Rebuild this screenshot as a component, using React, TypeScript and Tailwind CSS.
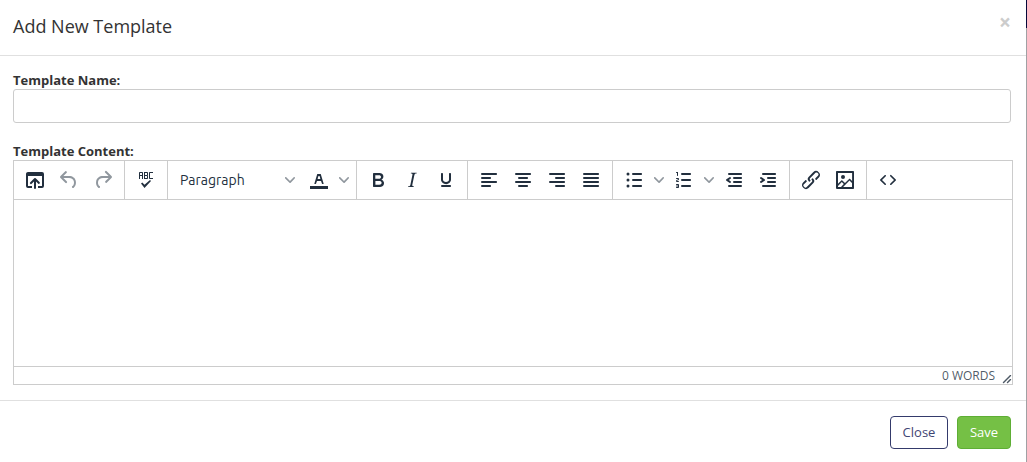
import type { ReactNode } from "react";

const ICONS = {
  browse:
    "M19 4a2 2 0 012 2v12a2 2 0 01-2 2h-4v-2h4V8H5v10h4v2H5a2 2 0 01-2-2V6c0-1.1.9-2 2-2h14zm-8 9.4l-2.3 2.3a1 1 0 11-1.4-1.4l4-4a1 1 0 011.4 0l4 4a1 1 0 01-1.4 1.4L13 13.4V20a1 1 0 01-2 0v-6.6z",
  undo: "M6.4 8H12c3.7 0 6.2 2 6.8 5.1.6 2.7-.4 5.6-2.3 6.8a1 1 0 01-1-1.8c1.1-.6 1.8-2.7 1.4-4.6-.5-2.1-2.1-3.5-4.9-3.5H6.4l3.3 3.3a1 1 0 11-1.4 1.4l-5-5a1 1 0 010-1.4l5-5a1 1 0 011.4 1.4L6.4 8z",
  redo: "M17.6 10H12c-2.8 0-4.4 1.4-4.9 3.5-.4 2 .3 4 1.4 4.6a1 1 0 11-1 1.8c-2-1.2-2.9-4.1-2.3-6.8.6-3 3-5.1 6.8-5.1h5.6l-3.3-3.3a1 1 0 111.4-1.4l5 5a1 1 0 010 1.4l-5 5a1 1 0 01-1.4-1.4l3.3-3.3z",
  spell:
    "M6 8v3H5V5c0-.3.1-.5.3-.7.2-.2.4-.3.7-.3h2c.3 0 .5.1.7.3.2.2.3.4.3.7v6H8V8H6zm0-3v2h2V5H6zm13 0h-3v5h3v1h-3a1 1 0 01-.7-.3 1 1 0 01-.3-.7V5c0-.3.1-.5.3-.7.2-.2.4-.3.7-.3h3v1zm-5 1.5l-.1.7c-.1.2-.3.3-.6.3.3 0 .5.1.6.3l.1.7V10c0 .3-.1.5-.3.7a1 1 0 01-.7.3h-3V4h3c.3 0 .5.1.7.3.2.2.3.4.3.7v1.5zM13 10V8h-2v2h2zm0-3V5h-2v2h2zm3 5l1 1-6.5 7L7 15.5l1.3-1 2.2 2.2L16 12z",
  color:
    "M3 18h18v3H3zM8.7 16h-.8a.5.5 0 01-.5-.6l2.7-9c.1-.3.3-.4.5-.4h2.8c.2 0 .4.1.5.4l2.7 9a.5.5 0 01-.5.6h-.8a.5.5 0 01-.4-.4l-.7-2.2c0-.3-.3-.4-.5-.4h-3.4c-.2 0-.4.1-.5.4l-.7 2.2c0 .3-.2.4-.4.4zm2.6-7.6l-.6 2a.5.5 0 00.5.6h1.6a.5.5 0 00.5-.6l-.6-2c0-.3-.3-.4-.5-.4h-.4c-.2 0-.4.1-.5.4z",
  bold: "M7.8 19c-.3 0-.5 0-.6-.2l-.2-.5V5.7c0-.2 0-.4.2-.5l.6-.2h5c1.5 0 2.7.3 3.5 1 .7.6 1.1 1.4 1.1 2.5a3 3 0 01-.6 1.9c-.4.6-1 1-1.6 1.2.4.1.9.3 1.3.6s.8.7 1 1.2c.4.4.5 1 .5 1.6 0 1.3-.4 2.3-1.3 3-.8.7-2.1 1-3.8 1H7.8zm5-8.3c.6 0 1.2-.1 1.6-.5.4-.3.6-.7.6-1.3 0-1.1-.8-1.7-2.3-1.7H9.3v3.5h3.4zm.5 6c.7 0 1.3-.1 1.7-.4.4-.4.6-.9.6-1.5s-.2-1-.7-1.4c-.4-.3-1-.4-2-.4H9.4v3.8h4z",
  italic:
    "M16.7 4.7l-.1.9h-.3c-.6 0-1 0-1.4.3-.3.3-.4.6-.5 1.1l-2.1 9.8v.6c0 .5.4.8 1.4.8h.2l-.2.8H8l.2-.8h.2c1.1 0 1.8-.5 2-1.5l2-9.8.1-.5c0-.6-.4-.8-1.4-.8h-.3l.2-.9h5.8z",
  underline:
    "M16 5c.6 0 1 .4 1 1v5.5a4 4 0 01-.4 1.8l-1 1.4a5.3 5.3 0 01-5.5 1 5 5 0 01-1.6-1c-.5-.4-.8-.9-1.1-1.4a4 4 0 01-.4-1.8V6c0-.6.4-1 1-1s1 .4 1 1v5.5c0 .3 0 .6.2 1l.6.7a3.3 3.3 0 002.2.8 3.4 3.4 0 002.2-.8c.3-.2.4-.5.6-.8l.2-.9V6c0-.6.4-1 1-1zM8 17h8c.6 0 1 .4 1 1s-.4 1-1 1H8a1 1 0 010-2z",
  left: "M5 5h14c.6 0 1 .4 1 1s-.4 1-1 1H5a1 1 0 110-2zm0 4h8c.6 0 1 .4 1 1s-.4 1-1 1H5a1 1 0 110-2zm0 8h8c.6 0 1 .4 1 1s-.4 1-1 1H5a1 1 0 010-2zm0-4h14c.6 0 1 .4 1 1s-.4 1-1 1H5a1 1 0 010-2z",
  center:
    "M5 5h14c.6 0 1 .4 1 1s-.4 1-1 1H5a1 1 0 110-2zm3 4h8c.6 0 1 .4 1 1s-.4 1-1 1H8a1 1 0 110-2zm0 8h8c.6 0 1 .4 1 1s-.4 1-1 1H8a1 1 0 010-2zm-3-4h14c.6 0 1 .4 1 1s-.4 1-1 1H5a1 1 0 010-2z",
  right:
    "M5 5h14c.6 0 1 .4 1 1s-.4 1-1 1H5a1 1 0 110-2zm6 4h8c.6 0 1 .4 1 1s-.4 1-1 1h-8a1 1 0 010-2zm0 8h8c.6 0 1 .4 1 1s-.4 1-1 1h-8a1 1 0 010-2zm-6-4h14c.6 0 1 .4 1 1s-.4 1-1 1H5a1 1 0 010-2z",
  justify:
    "M5 5h14c.6 0 1 .4 1 1s-.4 1-1 1H5a1 1 0 110-2zm0 4h14c.6 0 1 .4 1 1s-.4 1-1 1H5a1 1 0 110-2zm0 4h14c.6 0 1 .4 1 1s-.4 1-1 1H5a1 1 0 010-2zm0 4h14c.6 0 1 .4 1 1s-.4 1-1 1H5a1 1 0 010-2z",
  bullets:
    "M11 5h8c.6 0 1 .4 1 1s-.4 1-1 1h-8a1 1 0 010-2zm0 6h8c.6 0 1 .4 1 1s-.4 1-1 1h-8a1 1 0 010-2zm0 6h8c.6 0 1 .4 1 1s-.4 1-1 1h-8a1 1 0 010-2zM4.5 6a1.5 1.5 0 113 0 1.5 1.5 0 01-3 0zm0 6a1.5 1.5 0 113 0 1.5 1.5 0 01-3 0zm0 6a1.5 1.5 0 113 0 1.5 1.5 0 01-3 0z",
  numbers:
    "M10 17h8c.6 0 1 .4 1 1s-.4 1-1 1h-8a1 1 0 010-2zm0-6h8c.6 0 1 .4 1 1s-.4 1-1 1h-8a1 1 0 010-2zm0-6h8c.6 0 1 .4 1 1s-.4 1-1 1h-8a1 1 0 110-2zM6 4v3.5c0 .3-.2.5-.5.5a.5.5 0 01-.5-.5V5h-.5a.5.5 0 010-1H6zm-1 8.8l.2.2h1.3c.3 0 .5.2.5.5s-.2.5-.5.5H4.9a1 1 0 01-.9-1V13c0-.4.3-.8.6-1l1.2-.4.2-.3a.2.2 0 00-.2-.2H4.5a.5.5 0 01-.5-.5c0-.3.2-.5.5-.5h1.6c.5 0 .9.4.9 1v.1c0 .4-.3.8-.6 1l-1.2.4-.2.3zM7 17v2c0 .6-.4 1-1 1H4.5a.5.5 0 010-1h1.2c.2 0 .3-.1.3-.3 0-.2-.1-.3-.3-.3H4.4a.4.4 0 110-.8h1.3c.2 0 .3-.1.3-.3 0-.2-.1-.3-.3-.3H4.5a.5.5 0 110-1H6c.6 0 1 .4 1 1z",
  outdent:
    "M7 5h12c.6 0 1 .4 1 1s-.4 1-1 1H7a1 1 0 110-2zm5 4h7c.6 0 1 .4 1 1s-.4 1-1 1h-7a1 1 0 010-2zm0 4h7c.6 0 1 .4 1 1s-.4 1-1 1h-7a1 1 0 010-2zm-5 4h12a1 1 0 010 2H7a1 1 0 010-2zm1.6-3.8a1 1 0 01-1.2 1.6l-3-2a1 1 0 010-1.6l3-2a1 1 0 011.2 1.6L6.8 12l1.8 1.2z",
  indent:
    "M7 5h12c.6 0 1 .4 1 1s-.4 1-1 1H7a1 1 0 110-2zm5 4h7c.6 0 1 .4 1 1s-.4 1-1 1h-7a1 1 0 010-2zm0 4h7c.6 0 1 .4 1 1s-.4 1-1 1h-7a1 1 0 010-2zm-5 4h12a1 1 0 010 2H7a1 1 0 010-2zm-2.6-3.8L6.2 12l-1.8-1.2a1 1 0 011.2-1.6l3 2a1 1 0 010 1.6l-3 2a1 1 0 11-1.2-1.6z",
  link: "M6.2 12.3a1 1 0 011.4 1.4l-2.1 2a2 2 0 102.7 2.8l4.8-4.8a1 1 0 000-1.4 1 1 0 111.4-1.3 2.9 2.9 0 010 4L9.6 20a3.9 3.9 0 01-5.5-5.5l2-2zm11.6-.6a1 1 0 01-1.4-1.4l2-2a2 2 0 10-2.6-2.8L11 10.3a1 1 0 000 1.4A1 1 0 119.6 13a2.9 2.9 0 010-4L14.4 4a3.9 3.9 0 015.5 5.5l-2 2z",
  image:
    "M5 15.7l3.3-3.2c.3-.3.7-.3 1 0L12 15l4.1-4c.3-.4.8-.4 1 0l2 1.9V5H5v10.7zM5 18V19h3l2.8-2.9-2-2L5 17.9zm14-3l-2.5-2.4-6.4 6.5H19v-4zM4 3h16c.6 0 1 .4 1 1v16c0 .6-.4 1-1 1H4a1 1 0 01-1-1V4c0-.6.4-1 1-1zm6 8a2 2 0 100-4 2 2 0 000 4z",
  code: "M9.8 15.7c.3.3.3.8 0 1-.3.4-.9.4-1.2 0l-4.4-4.1a.8.8 0 010-1.2l4.4-4.2c.3-.3.9-.3 1.2 0 .3.3.3.8 0 1.1L6 12l3.8 3.7zM14.2 15.7c-.3.3-.3.8 0 1 .4.4.9.4 1.2 0l4.4-4.1c.3-.3.3-.9 0-1.2l-4.4-4.2a.8.8 0 00-1.2 0c-.3.3-.3.8 0 1.1L18 12l-3.8 3.7z",
};

type IconName = keyof typeof ICONS;

function Tool({ icon, label, disabled }: { icon: IconName; label: string; disabled?: boolean }) {
  return (
    <button
      type="button"
      aria-label={label}
      disabled={disabled}
      className="flex h-[34px] w-[34px] items-center justify-center text-[#222f3e] hover:bg-gray-200 disabled:text-[#222f3e]/50 disabled:hover:bg-transparent"
    >
      <svg width="24" height="24" viewBox="0 0 24 24" fill="currentColor" fillRule="evenodd" aria-hidden="true">
        <path d={ICONS[icon]} />
      </svg>
    </button>
  );
}

function Chevron() {
  return (
    <svg width="10" height="10" viewBox="0 0 10 10" className="fill-[#222f3e]/50" aria-hidden="true">
      <path d="M8.7 2.2c.3-.3.8-.3 1 0 .4.4.4.9 0 1.2L5.7 7.8c-.3.3-.9.3-1.2 0L.2 3.4a.8.8 0 010-1.2c.3-.3.8-.3 1.1 0L5 6l3.7-3.8z" />
    </svg>
  );
}

function SplitTool({ icon, label }: { icon: IconName; label: string }) {
  return (
    <div className="flex">
      <Tool icon={icon} label={label} />
      <button type="button" aria-label={`${label} options`} className="flex w-4 items-center justify-center hover:bg-gray-200">
        <Chevron />
      </button>
    </div>
  );
}

function Group({ children }: { children: ReactNode }) {
  return <div className="flex items-center border-r border-[#cccccc] px-1 last:border-r-0">{children}</div>;
}

export default function App() {
  return (
    <div className="flex min-h-screen bg-white font-['Open_Sans',sans-serif] text-[13px] text-[#333333]">
      <div role="dialog" aria-labelledby="dialog-title" className="flex min-w-0 flex-1 flex-col">
        <header className="flex h-14 items-start justify-between border-b border-[#e0e0e0] pt-3 pr-[15px] pl-[13px]">
          <h4 id="dialog-title" className="text-lg leading-7">
            Add New Template
          </h4>
          <button type="button" aria-label="Close dialog" className="text-[21px] leading-5 font-bold text-[#cccccc]">
            ×
          </button>
        </header>

        <form className="pt-4 pr-[13px] pb-[15px] pl-[13px]">
          <div className="pr-0.5">
            <label htmlFor="template-name" className="block leading-[17px] font-bold">
              Template Name:
            </label>
            <input
              id="template-name"
              type="text"
              className="block h-[34px] w-full rounded-[3px] border border-[#cccccc] px-3 outline-none focus:border-blue-400"
            />
          </div>

          <label htmlFor="template-content" className="mt-5 block leading-[17px] font-bold">
            Template Content:
          </label>
          <div className="border border-[#cccccc]">
            <div className="flex h-[39px] border-b border-[#cccccc]">
              <Group>
                <Tool icon="browse" label="Browse" />
                <Tool icon="undo" label="Undo" disabled />
                <Tool icon="redo" label="Redo" disabled />
              </Group>
              <Group>
                <Tool icon="spell" label="Spellcheck" />
              </Group>
              <Group>
                <div className="grid w-[130px] items-center">
                  <select
                    aria-label="Block format"
                    className="col-start-1 row-start-1 h-[34px] w-full appearance-none bg-transparent px-2 font-['Ubuntu','Noto_Sans',sans-serif] text-sm text-[#222f3e]"
                  >
                    <option>Paragraph</option>
                  </select>
                  <span className="pointer-events-none col-start-1 row-start-1 mr-[7px] justify-self-end">
                    <Chevron />
                  </span>
                </div>
                <SplitTool icon="color" label="Text color" />
              </Group>
              <Group>
                <Tool icon="bold" label="Bold" />
                <Tool icon="italic" label="Italic" />
                <Tool icon="underline" label="Underline" />
              </Group>
              <Group>
                <Tool icon="left" label="Align left" />
                <Tool icon="center" label="Align center" />
                <Tool icon="right" label="Align right" />
                <Tool icon="justify" label="Justify" />
              </Group>
              <Group>
                <SplitTool icon="bullets" label="Bullet list" />
                <SplitTool icon="numbers" label="Numbered list" />
                <Tool icon="outdent" label="Decrease indent" />
                <Tool icon="indent" label="Increase indent" />
              </Group>
              <Group>
                <Tool icon="link" label="Insert link" />
                <Tool icon="image" label="Insert image" />
              </Group>
              <Group>
                <Tool icon="code" label="Source code" />
              </Group>
            </div>
            <textarea id="template-content" className="block h-[166px] w-full resize-none p-4 outline-none" />
            <div className="flex h-[18px] items-center justify-end border-t border-[#cccccc] text-xs leading-4 text-[#222f3e]/80">
              <span className="mr-[7px]">0 WORDS</span>
              <svg width="10" height="10" viewBox="0 0 10 10" className="self-end fill-[#222f3e]/80" aria-hidden="true">
                <path d="M8.1 1.1A.5.5 0 119 2l-7 7A.5.5 0 111 8l7-7zM8.1 5.1A.5.5 0 119 6l-3 3A.5.5 0 115 8l3-3z" />
              </svg>
            </div>
          </div>
        </form>

        <footer className="flex justify-end gap-[9px] border-t border-[#e0e0e0] pt-[15px] pr-[15px] pb-3">
          <button type="button" className="h-[33px] w-[58px] rounded border border-[#343a6b] text-[#3f4674]">
            Close
          </button>
          <button type="submit" className="h-[33px] w-[54px] rounded border border-[#5eae35] bg-[#75c045] text-white">
            Save
          </button>
        </footer>
      </div>
      <div className="flex w-px flex-col bg-[#a0a0a4]">
        <div className="h-7 bg-[#06083a]" />
      </div>
    </div>
  );
}
